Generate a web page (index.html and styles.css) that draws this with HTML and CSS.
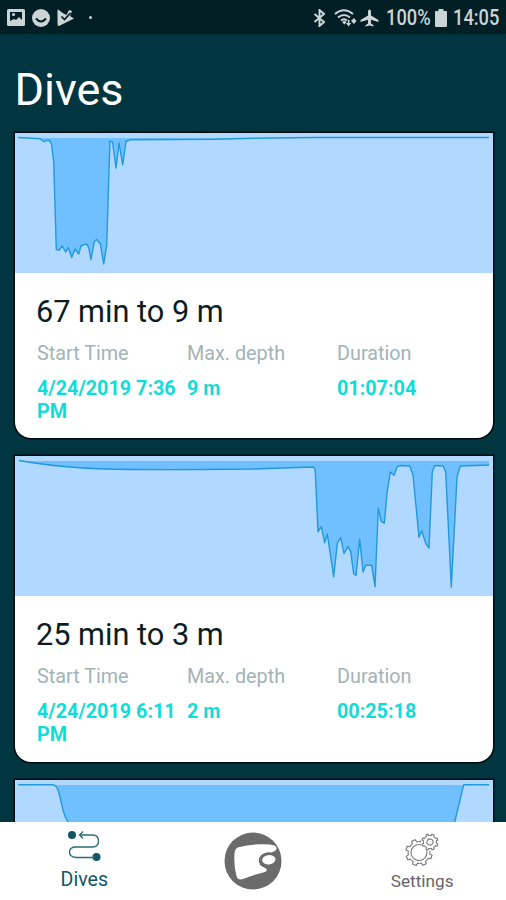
FILE: index.html
```html
<!DOCTYPE html>
<html lang="en">
<head>
<meta charset="UTF-8">
<meta name="viewport" content="width=device-width, initial-scale=1">
<title>Dives</title>
<link rel="stylesheet" href="styles.css">
</head>
<body>

<div class="app">
    <div class="statusbar">
        <div class="status-left">
            <svg width="18" height="17" viewBox="0 0 18 17">
                <rect class="s-fill" x="0" y="0" width="18" height="17" rx="1.5"/>
                <path class="s-dark" d="M3 3h12v8l-3-3-3 3-2-1-4 2z"/>
                <circle class="s-fill" cx="6.5" cy="5.5" r="1.6"/>
            </svg>
            <svg width="18" height="18" viewBox="0 0 18 18">
                <circle class="s-fill" cx="9" cy="9" r="9"/>
                <path class="s-darkline" d="M4 9.5q5 6 10 0"/>
            </svg>
            <svg width="17" height="17" viewBox="0 0 17 17">
                <path class="s-fill" d="M1 0.500L6.500 4.500 9.500 6 12 1l3 1-2 5 4 2.500L2 17Q0.500 17 0.500 15V1z"/>
                <path class="s-darkline thin" d="M4.500 7.500l3 3L13.500 4"/>
            </svg>
            <span class="dot"></span>
        </div>
        <div class="status-right">
            <svg class="bt" width="13" height="18" viewBox="0 0 13 18">
                <path class="s-line" d="M1.500 5l9.500 8-4.500 4V1L11 5l-9.500 8"/>
            </svg>
            <svg class="wifi" width="23" height="18" viewBox="0 0 23 18">
                <path class="s-line" d="M1 5Q10-2.500 19 5M4 8.500q6-5 12 0M7 11.500q3.500-2.500 6 0"/>
                <path class="s-fill" d="M8 13l2.500-1.500 2 1.500-2 2.500zM12 14h1.800v-3h1.600v3h1.800l-2.600 3.500zM17 12l3-3 2.500 3-2.500 3z"/>
            </svg>
            <svg class="plane" width="19" height="18" viewBox="0 0 19 18">
                <path class="s-fill" d="M9.500 0.500q1.500 0 1.500 2v4l7.500 4.500v2L11 10.700v3.800l2.500 1.800v1.200l-4-1-4 1v-1.200L8 14.500v-3.800L0.500 13v-2L8 6.500v-4q0-2 1.500-2z"/>
            </svg>
            <span class="battery-text">100%</span>
            <svg class="battery" width="12" height="18" viewBox="0 0 12 18">
                <path class="s-fill" d="M3.500 0h5v2H11q1 0 1 1v14q0 1-1 1H1q-1 0-1-1V3q0-1 1-1h2.500z"/>
            </svg>
            <span class="clock">14:05</span>
        </div>
    </div>

    <h1 class="title">Dives</h1>

    <div class="dive-list">
        <div class="card">
            <svg class="chart" viewBox="0 0 478 140">
                <path class="depth" d="M3.300 4.500L25 5.800 29 8.800 31 7.500 34.300 7.200 36.500 11 38.700 29 41.300 116.500 44.300 117 47.300 113 50.700 119 53.300 114.500 56.700 124.500 60 116 63.700 121 66 113 69 111.500 72.300 111.500 74 116 76 126.500 79.300 108.500 81.700 106.500 85.300 111 88.700 131 91.700 112.500 94 36 95 8.200 97.500 9 101 35 104 10 107.700 32 111 8.500 115 6.800 200 6.300 238 5.200 300 4.500H474V5H3.300z"/>
                <path class="line" d="M3.300 4.500L25 5.800 29 8.800 31 7.500 34.300 7.200 36.500 11 38.700 29 41.300 116.500 44.300 117 47.300 113 50.700 119 53.300 114.500 56.700 124.500 60 116 63.700 121 66 113 69 111.500 72.300 111.500 74 116 76 126.500 79.300 108.500 81.700 106.500 85.300 111 88.700 131 91.700 112.500 94 36 95 8.200 97.500 9 101 35 104 10 107.700 32 111 8.500 115 6.800 200 6.300 238 5.200 300 4.500H474"/>
            </svg>
            <div class="info">
                <h2>67 min to 9 m</h2>
                <div class="stats">
                    <div><p class="label">Start Time</p><p class="value">4/24/2019 7:36 PM</p></div>
                    <div><p class="label">Max. depth</p><p class="value">9 m</p></div>
                    <div><p class="label">Duration</p><p class="value">01:07:04</p></div>
                </div>
            </div>
        </div>

        <div class="card">
            <svg class="chart" viewBox="0 0 478 140">
                <path class="depth" d="M4 4.500Q35 10 68 12T185 13.500L238 13 297.300 11Q300 11 300.300 15.700L303 75.700 306.300 70.700 309.700 86.700 312.300 78 318.700 120.700 322.300 87.300 325.700 81.700 329 97.300 333 90.700 335.700 95.700 338.700 118 341 119.300 344.700 83 348 116 350.700 109.300H356.700L360 130.700 363.300 52.300 366.300 65.700 369.300 67 372 37.300 375.300 16 379 19.300 382.300 10.700 386 9.500 394.700 10 398 19 404 81.300 406.700 75 410.700 87.300 414 92 417.300 15.700 419.700 9.700H428L430.700 15.700 436.300 131 442 20.700 445.300 10 474 9V5H4z"/>
                <path class="line" d="M4 4.500Q35 10 68 12T185 13.500L238 13 297.300 11Q300 11 300.300 15.700L303 75.700 306.300 70.700 309.700 86.700 312.300 78 318.700 120.700 322.300 87.300 325.700 81.700 329 97.300 333 90.700 335.700 95.700 338.700 118 341 119.300 344.700 83 348 116 350.700 109.300H356.700L360 130.700 363.300 52.300 366.300 65.700 369.300 67 372 37.300 375.300 16 379 19.300 382.300 10.700 386 9.500 394.700 10 398 19 404 81.300 406.700 75 410.700 87.300 414 92 417.300 15.700 419.700 9.700H428L430.700 15.700 436.300 131 442 20.700 445.300 10 474 9"/>
            </svg>
            <div class="info">
                <h2>25 min to 3 m</h2>
                <div class="stats">
                    <div><p class="label">Start Time</p><p class="value">4/24/2019 6:11 PM</p></div>
                    <div><p class="label">Max. depth</p><p class="value">2 m</p></div>
                    <div><p class="label">Duration</p><p class="value">00:25:18</p></div>
                </div>
            </div>
        </div>

        <div class="card">
            <svg class="chart" viewBox="0 0 478 140">
                <path class="depth" d="M38 5Q42 5 44 13L48.300 31 53.300 42 70 100H425L439.700 42 448.700 5z"/>
                <path class="line" d="M3.300 4.700H38Q42 5 44 13L48.300 31Q50 38 53.300 42L70 100H425L439.700 42 448.700 4.700H474"/>
            </svg>
        </div>
    </div>

    <nav class="tabbar">
        <a class="tab tab-dives active">
            <svg width="34" height="32" viewBox="0 0 34 32">
                <circle class="t-fill" cx="5" cy="5" r="4"/>
                <circle class="t-fill" cx="29.500" cy="27" r="4"/>
                <path class="t-line" d="M12.500 5H25.500Q31.500 5 31.500 11T25.500 17H9Q2.500 17 2.500 22T9 27.500H28M16 1.500L12.500 5 16 8.500"/>
            </svg>
            <span>Dives</span>
        </a>
        <a class="tab tab-logo">
            <svg width="58" height="58" viewBox="0 0 58 58">
                <circle class="logo" cx="29" cy="29" r="28.500"/>
                <path class="cut" d="M14.500 15.300Q26 12 38.600 12.300Q46 12.200 50.500 13.500Q54.500 16 51 19Q47 21 42.600 21.500L36 26V33L42 36.500Q44 38.500 41 40Q30 42.500 19 47Q13.500 48.500 12.500 44Q9.500 33 10.500 21Q11 16.500 14.500 15.300z"/>
                <ellipse class="logo" cx="44.500" cy="28" rx="9.800" ry="7.700" transform="rotate(-6 44.500 28)"/>
                <ellipse class="cut" cx="44.800" cy="27.800" rx="6.700" ry="4.700" transform="rotate(-6 44.800 27.800)"/>
            </svg>
        </a>
        <a class="tab tab-settings">
            <svg width="36" height="36" viewBox="0 0 36 36">
                <defs>
                    <path id="tooth" d="M-4.100-10Q-3.200-10.500-2.300-10.600L-1.900-13.200H1.900L2.300-10.600Q3.200-10.500 4.100-10"/>
                    <g id="gear">
                        <use href="#tooth"/>
                        <use href="#tooth" transform="rotate(45)"/>
                        <use href="#tooth" transform="rotate(90)"/>
                        <use href="#tooth" transform="rotate(135)"/>
                        <use href="#tooth" transform="rotate(180)"/>
                        <use href="#tooth" transform="rotate(225)"/>
                        <use href="#tooth" transform="rotate(270)"/>
                        <use href="#tooth" transform="rotate(315)"/>
                    </g>
                </defs>
                <g class="gear big" transform="translate(15 20.500) rotate(20)">
                    <use href="#gear"/>
                    <circle r="8"/>
                </g>
                <circle class="cut" cx="26" cy="10" r="9"/>
                <g class="gear small" transform="translate(26 10) rotate(22) scale(.6)">
                    <use href="#gear"/>
                    <circle r="5"/>
                </g>
            </svg>
            <span>Settings</span>
        </a>
    </nav>
</div>

</body>
</html>
```
FILE: styles.css
```css
* { box-sizing: border-box; }

body {
    margin: 0;
    background: #013540;
    font-family: Roboto, "Liberation Sans", sans-serif;
}

h1, h2, p { margin: 0; font-weight: 400; }
svg { display: block; flex: none; }

.app {
    display: flex;
    flex-direction: column;
    height: 900px;
    overflow: hidden;
}

/* --- Status bar --- */
.statusbar {
    display: flex;
    justify-content: space-between;
    align-items: center;
    flex: none;
    height: 34px;
    padding: 1px 7px 0;
    background: #011f24;
    color: #ccd4d5;
}
.status-left, .status-right { display: flex; align-items: center; }
.status-left { gap: 7px; }
.s-fill { fill: #ccd4d5; }
.s-dark { fill: #011f24; }
.s-darkline { fill: none; stroke: #011f24; stroke-width: 2; }
.s-darkline.thin { stroke-width: 1.7; }
.s-line { fill: none; stroke: #ccd4d5; stroke-width: 2; }
.dot { width: 3px; height: 3px; margin-left: 8px; border-radius: 50%; background: #ccd4d5; }
.wifi { margin-left: 8px; }
.plane { margin-left: 3px; }
.battery-text, .clock { font-size: 22px; font-weight: 500; line-height: 32px; white-space: nowrap; transform-origin: left; }
.battery-text { width: 43px; margin-left: 7px; transform: scaleX(.83); }
.battery { margin-left: 6px; }
.clock { width: 46px; margin-left: 6px; transform: scaleX(.83); }

/* --- Dive list --- */
.title {
    flex: none;
    height: 98.5px;
    padding: 30px 0 0 14.5px;
    color: #fff;
    font-size: 45px;
    line-height: 52px;
}
.dive-list {
    display: flex;
    flex-direction: column;
    gap: 18px;
    flex: 1;
    min-height: 0;
    padding: 2px 13px 0 15px;
    overflow: hidden;
    margin-top: -2px;
}
.card {
    flex: none;
    height: 305.5px;
    border-radius: 0 0 16px 16px;
    background: #fff;
    box-shadow: 0 0 0 1.5px #000b10;
}
.chart { width: 478px; height: 140px; background: #b1d8ff; }
.depth { fill: #70bfff; }
.line { fill: none; stroke: #2299dd; stroke-width: 1.4; stroke-linejoin: round; }
.info { padding: 21px 0 0 22px; }
.info h2 { margin-left: -1px; color: #0b1d22; font-size: 30.7px; line-height: 36px; }
.stats {
    display: grid;
    grid-template-columns: 150px 150px 150px;
    margin-top: 11px;
}
.label { color: #a3b3b6; font-size: 19.8px; line-height: 25px; }
.value {
    margin-top: 11px;
    color: #12dcd8;
    font-size: 19.8px;
    font-weight: 700;
    line-height: 23px;
}

/* --- Bottom tabs --- */
.tabbar {
    display: grid;
    grid-template-columns: repeat(3, 1fr);
    flex: none;
    height: 78px;
    background: #fff;
}
.tab {
    display: flex;
    flex-direction: column;
    align-items: center;
    color: #666;
}
.tab-dives { padding-top: 8px; color: #135764; }
.tab-dives span { margin-top: 6px; font-size: 19.6px; line-height: 24px; }
.tab-logo { padding-top: 10px; }
.tab-settings { padding: 10px 0 0 1px; }
.tab-settings span { margin-top: 1px; font-size: 17.200px; line-height: 24px; }
.t-fill { fill: #135764; }
.t-line { fill: none; stroke: #2d6d73; stroke-width: 1.4; }
.logo { fill: #6b6b6b; }
.cut { fill: #fff; }
.gear { fill: none; stroke: #777; stroke-width: 1.1; }
.gear.small { stroke-width: 1.8; }
```
